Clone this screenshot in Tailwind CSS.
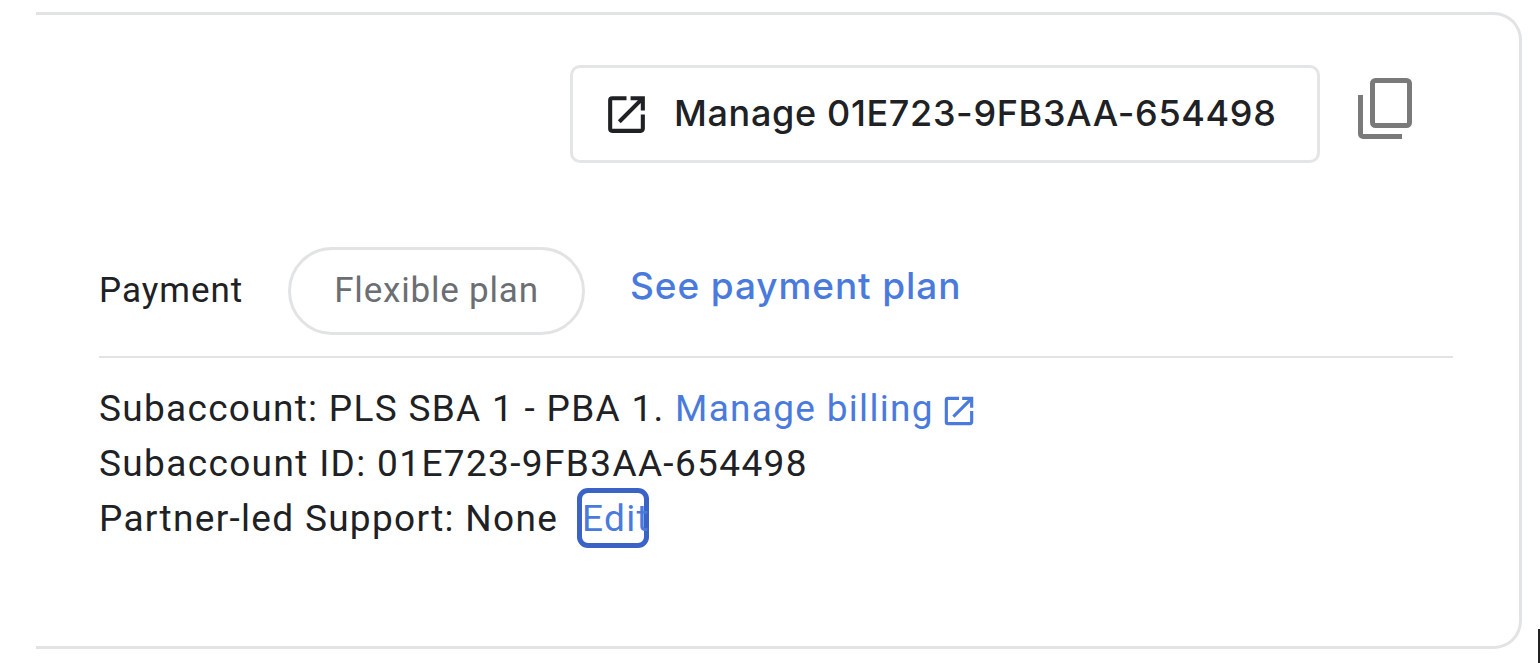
<!DOCTYPE html>
<html lang="en">
<head>
    <meta charset="UTF-8">
    <title>Subaccount</title>
    <script src="https://cdn.jsdelivr.net/npm/@tailwindcss/browser@4"></script>
</head>
<body class="bg-white overflow-hidden h-[663px] relative font-['Roboto',sans-serif] text-[#202124]">
    <div class="ml-[36px] mt-[12px] w-[1486px] h-[637px] border-[3px] border-l-0 border-[#e2e3e5] rounded-r-[28px] pt-[50px] pl-[63px] pr-[66px]">
        <!-- top actions -->
        <div class="flex items-center justify-end pr-[41px] gap-[38px] h-[98px]">
            <button class="flex items-center w-[750px] h-[98px] border-[3px] border-[#e4e5e7] rounded-[10px] pl-[29px] gap-[23px]">
                <svg class="w-[49px] h-[49px] shrink-0" viewBox="0 0 24 24" fill="#202124"><path d="M19 19H5V5h7V3H5a2 2 0 0 0-2 2v14a2 2 0 0 0 2 2h14c1.1 0 2-.9 2-2v-7h-2v7zM14 3v2h3.59l-9.83 9.83 1.41 1.41L19 6.41V10h2V3h-7z"/></svg>
                <span class="font-['Inter',sans-serif] font-medium text-[36px] tracking-[0.65px] -mt-[2px] whitespace-nowrap">Manage 01E723-9FB3AA-654498</span>
            </button>
            <svg class="w-[54px] h-[61px] shrink-0 -mt-[11px]" viewBox="0 0 54 61" fill="none" stroke="#7a7a7a" stroke-width="5"><rect x="14.5" y="2.5" width="37" height="45" rx="3"/><path d="M2.5 17v39a2.5 2.5 0 0 0 2.5 2.5h39"/></svg>
        </div>

        <!-- payment row -->
        <div class="flex items-center mt-[83px] h-[90px]">
            <span class="text-[35px] tracking-[1px] w-[189px]">Payment</span>
            <span class="flex items-center justify-center w-[297px] h-[88px] border-[3px] border-[#e2e3e5] rounded-full text-[35px] tracking-[0.8px] text-[#6b6e72]">Flexible plan</span>
            <a class="ml-[45px] -mt-[10px] font-['Inter',sans-serif] font-medium text-[37px] tracking-[0.9px] text-[#4a7bdc] whitespace-nowrap">See payment plan</a>
        </div>
        <div class="h-[2px] bg-[#e2e3e5] mt-[20px]"></div>

        <!-- details -->
        <div class="mt-[23px] text-[37px] tracking-[1.3px] leading-[55px]">
            <p class="flex items-center whitespace-nowrap">Subaccount: PLS SBA 1 - PBA 1.&nbsp;<a class="text-[#4a7bdc]">Manage billing</a>
                <svg class="w-[38px] h-[38px] ml-[6px] mt-[4px]" viewBox="0 0 24 24" fill="#4a7bdc"><path d="M19 19H5V5h7V3H5a2 2 0 0 0-2 2v14a2 2 0 0 0 2 2h14c1.1 0 2-.9 2-2v-7h-2v7zM14 3v2h3.59l-9.83 9.83 1.41 1.41L19 6.41V10h2V3h-7z"/></svg>
            </p>
            <p class="whitespace-nowrap tracking-[1.36px]">Subaccount ID: 01E723-9FB3AA-654498</p>
            <p class="flex items-center whitespace-nowrap h-[55px]">Partner-led Support: None
                <a class="ml-[19px] w-[72px] h-[60px] -mt-[1px] flex items-center border-[5px] border-[#3b63c6] rounded-[11px] text-[#4a7bdc]">Edit</a>
            </p>
        </div>
    </div>
    <div class="absolute right-0 top-[629px] w-[2px] h-[34px] bg-[#222]"></div>
</body>
</html>
